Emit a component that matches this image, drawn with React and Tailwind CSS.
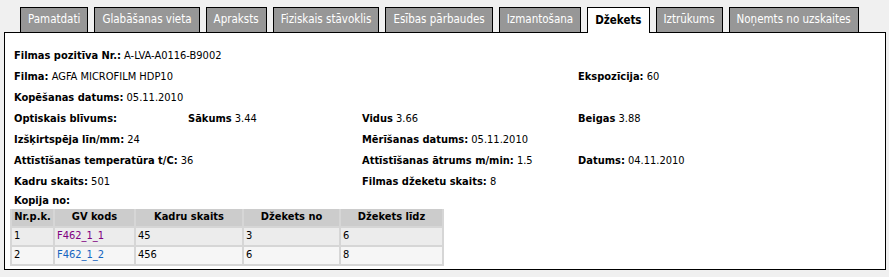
import React from 'react';

const tabs = [
  'Pamatdati',
  'Glabāšanas vieta',
  'Apraksts',
  'Fiziskais stāvoklis',
  'Esības pārbaudes',
  'Izmantošana',
  'Džekets',
  'Iztrūkums',
  'Noņemts no uzskaites',
];

const activeTab = 'Džekets';

const Field = ({ label, value }) => (
  <span className="whitespace-nowrap">
    <b className="font-bold">{label}</b> {value}
  </span>
);

const copies = [
  { nr: 1, code: 'F462_1_1', visited: true, frames: 45, from: 3, to: 6 },
  { nr: 2, code: 'F462_1_2', visited: false, frames: 456, from: 6, to: 8 },
];

const App = () => {
  return (
    <div className="h-[277px] w-[889px] bg-[#f0f0f0] pt-[7px] pl-[4px] font-['DejaVu_Sans_Condensed','DejaVu_Sans',sans-serif] text-[11px] text-black">
      <div className="relative z-10 -mb-px flex items-start gap-[6px] pl-[16px] text-[11.5px]">
        {tabs.map((tab) =>
          tab === activeTab ? (
            <div
              key={tab}
              className="flex h-[26px] items-center border border-b-0 border-black bg-white px-[7px] font-bold"
            >
              {tab}
            </div>
          ) : (
            <div
              key={tab}
              className="flex h-[25px] items-center border border-b-0 border-black bg-[#979797] px-[7px] text-white"
            >
              {tab}
            </div>
          )
        )}
      </div>

      <div className="h-[238px] w-[882px] border border-black bg-white pl-[9px] pt-[13px]">
        <div className="grid grid-cols-[174px_174px_216px_1fr]">
          <div className="col-span-4 flex h-[21px] items-center">
            <Field label="Filmas pozitīva Nr.:" value="A-LVA-A0116-B9002" />
          </div>

          <div className="col-span-3 flex h-[21px] items-center">
            <Field label="Filma:" value="AGFA MICROFILM HDP10" />
          </div>
          <div className="flex h-[21px] items-center">
            <Field label="Ekspozīcija:" value="60" />
          </div>

          <div className="col-span-4 flex h-[21px] items-center">
            <Field label="Kopēšanas datums:" value="05.11.2010" />
          </div>

          <div className="flex h-[21px] items-center">
            <b>Optiskais blīvums:</b>
          </div>
          <div className="flex h-[21px] items-center">
            <Field label="Sākums" value="3.44" />
          </div>
          <div className="flex h-[21px] items-center">
            <Field label="Vidus" value="3.66" />
          </div>
          <div className="flex h-[21px] items-center">
            <Field label="Beigas" value="3.88" />
          </div>

          <div className="col-span-2 flex h-[21px] items-center">
            <Field label="Izšķirtspēja līn/mm:" value="24" />
          </div>
          <div className="col-span-2 flex h-[21px] items-center">
            <Field label="Mērīšanas datums:" value="05.11.2010" />
          </div>

          <div className="col-span-2 flex h-[21px] items-center">
            <Field label="Attīstīšanas temperatūra t/C:" value="36" />
          </div>
          <div className="flex h-[21px] items-center">
            <Field label="Attīstīšanas ātrums m/min:" value="1.5" />
          </div>
          <div className="flex h-[21px] items-center">
            <Field label="Datums:" value="04.11.2010" />
          </div>

          <div className="col-span-2 flex h-[21px] items-center">
            <Field label="Kadru skaits:" value="501" />
          </div>
          <div className="col-span-2 flex h-[21px] items-center">
            <Field label="Filmas džeketu skaits:" value="8" />
          </div>
        </div>

        <div className="flex h-[16px] items-center font-bold">Kopija no:</div>

        <table className="-ml-[4px] w-[434px] border-collapse">
          <thead>
            <tr className="h-[15px] bg-[#cccccc]">
              <th className="w-[43px] border-2 border-[#d6d6d6] border-t-0 text-center font-bold">Nr.p.k.</th>
              <th className="w-[81px] border-2 border-[#d6d6d6] border-t-0 text-center font-bold">GV kods</th>
              <th className="w-[108px] border-2 border-[#d6d6d6] border-t-0 text-center font-bold">Kadru skaits</th>
              <th className="w-[97px] border-2 border-[#d6d6d6] border-t-0 text-center font-bold">Džekets no</th>
              <th className="border-2 border-[#d6d6d6] border-t-0 text-center font-bold">Džekets līdz</th>
            </tr>
          </thead>
          <tbody>
            {copies.map((c, i) => (
              <tr key={c.nr} className={i === 0 ? 'h-[19px] bg-[#ececec]' : 'h-[19px] bg-[#f6f6f6]'}>
                <td className="border-2 border-[#d6d6d6] pl-[2px]">{c.nr}</td>
                <td className="border-2 border-[#d6d6d6] pl-[2px]">
                  <a href="#" className={c.visited ? 'text-[#800080]' : 'text-[#1565c0]'}>
                    {c.code}
                  </a>
                </td>
                <td className="border-2 border-[#d6d6d6] pl-[2px]">{c.frames}</td>
                <td className="border-2 border-[#d6d6d6] pl-[2px]">{c.from}</td>
                <td className="border-2 border-[#d6d6d6] pl-[2px]">{c.to}</td>
              </tr>
            ))}
          </tbody>
        </table>
      </div>
    </div>
  );
};

export default App;
